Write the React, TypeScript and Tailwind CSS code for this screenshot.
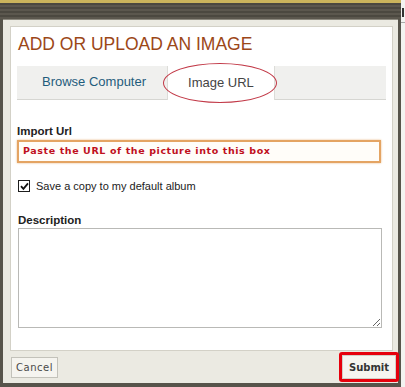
export default function App() {
  return (
    <div className="w-[405px] h-[387px] flex bg-[#f3f3f1] overflow-hidden font-['Liberation_Sans',Arial,sans-serif]">
      <div className="w-[401px] flex flex-col shrink-0">
        <div className="h-[3px] bg-[#cbb45c]" />
        <div className="h-[16px] bg-[repeating-linear-gradient(180deg,#4b4840_0px,#4b4840_2px,#5b574e_2px,#5b574e_4px)]" />
        {/* dialog */}
        <div className="flex-1 flex flex-col bg-[#ebeae2] border-x-[3px] border-b-[4px] border-[#57544b]">
          <div className="h-[1px] bg-[#8c897f]" />
          <div className="flex-1 flex flex-col pt-[6px] pl-[7px] pr-[5px]">
            <div className="flex-1 flex flex-col bg-white border border-[#d3d1c7] px-[6px] pt-[9px]">
              <h1 className="pl-[1px] text-[17.5px] leading-none text-[#9c4718] tracking-[0px]">
                ADD OR UPLOAD AN IMAGE
              </h1>

              <div className="relative mt-[12px] h-[34px] flex bg-[#f0f0ee] border-b border-[#d6d6d2]">
                <div className="flex items-center pl-[25px] pr-[21px] text-[13px] text-[#1f5c7c]">
                  Browse Computer
                </div>
                <div className="flex items-center px-[20px] -mb-px bg-white border-x border-[#dcdcd8] text-[13px] text-[#444]">
                  Image URL
                </div>
                <div className="absolute left-[146px] top-[-3px] w-[114px] h-[40px] rounded-[50%] border-[1.5px] border-[#c23a48]" />
              </div>

              <div className="mt-[26px] text-[11.5px] leading-none font-bold text-[#222]">Import Url</div>
              <div className="mt-[3px] w-[364px] h-[23px] flex items-center pl-[4px] bg-[#fffdf9] border-2 border-[#e4a463] shadow-[0_0_2px_#e9b985] font-['DejaVu_Sans',Verdana,sans-serif] font-bold text-[9.5px] tracking-[0.6px] text-[#c0101c]">
                Paste the URL of the picture into this box
              </div>

              <label className="mt-[17px] flex items-center gap-[6px] h-[12px] pl-[1px]">
                <span className="w-[12px] h-[12px] border border-[#1d1d1d] bg-white flex items-center justify-center">
                  <svg width="9" height="9" viewBox="0 0 9 9">
                    <path d="M1 4.2 L3.4 6.8 L8 1.4" fill="none" stroke="#111" strokeWidth="1.8" />
                  </svg>
                </span>
                <span className="text-[11px] text-[#222]">Save a copy to my default album</span>
              </label>

              <div className="mt-[23px] text-[11.5px] leading-none font-bold text-[#222] pl-[1px]">Description</div>
              <textarea
                className="mt-[1px] ml-[1px] w-[364px] h-[100px] border border-[#b9b9b6] bg-white outline-none"
                defaultValue=""
              />
            </div>
          </div>

          {/* footer */}
          <div className="h-[32px] flex items-center justify-between pl-[8px]">
            <button className="h-[21px] w-[47px] border border-[#c3c2ba] bg-[#f5f4ef] font-['DejaVu_Sans',Verdana,sans-serif] text-[10px] tracking-[0.5px] text-[#4a4a4a]">
              Cancel
            </button>
            <div className="h-[30px] w-[60px] -mr-[1px] border-[3.5px] border-[#e6000c] rounded-[3px] flex items-stretch">
              <button className="flex-1 bg-[#f6f5f0] border border-[#d2d0c8] font-['DejaVu_Sans',Verdana,sans-serif] font-bold text-[10px] text-[#333]">
                Submit
              </button>
            </div>
          </div>
        </div>
      </div>
      <div className="flex-1 flex flex-col">
        <div className="h-[8px]" />
        <div className="ml-[1px] w-[2px] h-[9px] bg-[#333]" />
        <div className="mt-[5px] h-[1px] bg-[#a9a9a9]" />
      </div>
    </div>
  );
}
